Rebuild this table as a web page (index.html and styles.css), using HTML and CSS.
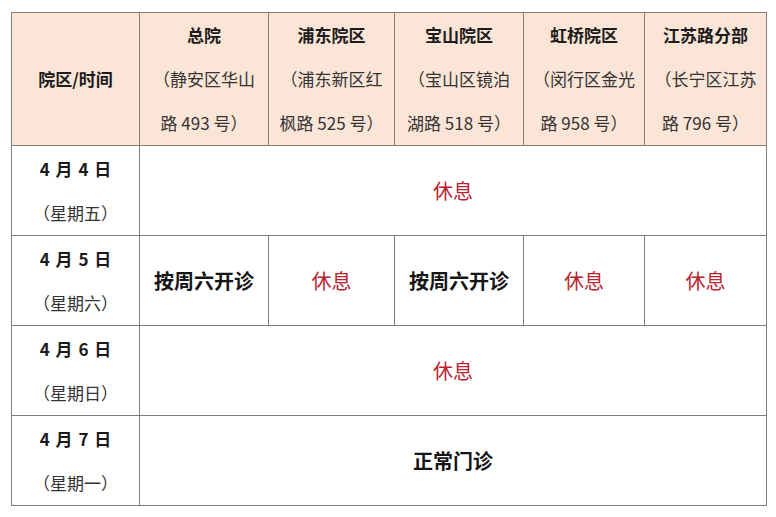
FILE: index.html
```html
<!DOCTYPE html>
<html lang="zh-CN">
<head>
<meta charset="utf-8">
<title>清明节门诊安排</title>
<link rel="stylesheet" href="styles.css">
</head>
<body>
<table class="schedule">
  <colgroup>
    <col class="c0"><col class="c1"><col class="c2"><col class="c3"><col class="c4"><col class="c5">
  </colgroup>
  <thead>
    <tr class="head-row">
      <th class="corner">院区/时间</th>
      <th><span class="name">总院</span><br><span class="addr">（静安区华山<br>路 493 号）</span></th>
      <th><span class="name">浦东院区</span><br><span class="addr">（浦东新区红<br>枫路 525 号）</span></th>
      <th><span class="name">宝山院区</span><br><span class="addr">（宝山区镜泊<br>湖路 518 号）</span></th>
      <th><span class="name">虹桥院区</span><br><span class="addr">（闵行区金光<br>路 958 号）</span></th>
      <th><span class="name">江苏路分部</span><br><span class="addr">（长宁区江苏<br>路 796 号）</span></th>
    </tr>
  </thead>
  <tbody>
    <tr class="day-row">
      <td class="date"><span class="d">4 月 4 日</span><br><span class="w">（星期五）</span></td>
      <td colspan="5" class="rest">休息</td>
    </tr>
    <tr class="day-row">
      <td class="date"><span class="d">4 月 5 日</span><br><span class="w">（星期六）</span></td>
      <td class="open">按周六开诊</td>
      <td class="rest">休息</td>
      <td class="open">按周六开诊</td>
      <td class="rest">休息</td>
      <td class="rest">休息</td>
    </tr>
    <tr class="day-row">
      <td class="date"><span class="d">4 月 6 日</span><br><span class="w">（星期日）</span></td>
      <td colspan="5" class="rest">休息</td>
    </tr>
    <tr class="day-row">
      <td class="date"><span class="d">4 月 7 日</span><br><span class="w">（星期一）</span></td>
      <td colspan="5" class="open">正常门诊</td>
    </tr>
  </tbody>
</table>
</body>
</html>
```

FILE: styles.css
```css
html, body {
  margin: 0;
  padding: 0;
  background: #ffffff;
}

body {
  font-family: "Noto Sans CJK SC", "Noto Sans", sans-serif;
  color: #222222;
}

.schedule {
  margin: 12px 0 0 11px;
  border-collapse: collapse;
  table-layout: fixed;
  width: 755px;
}

.c0 { width: 128px; }
.c1 { width: 129px; }
.c2 { width: 126px; }
.c3 { width: 129px; }
.c4 { width: 121px; }
.c5 { width: 122px; }

.schedule th,
.schedule td {
  border: 1px solid #7d7d7d;
  padding: 0;
  text-align: center;
  vertical-align: middle;
  white-space: nowrap;
  overflow: hidden;
}

.head-row {
  height: 132px;
}

.head-row th {
  background: #fbe5d7;
  border-color: #857e76;
  font-size: 17px;
  line-height: 44px;
  font-weight: normal;
}

.head-row .corner {
  font-weight: bold;
  color: #1c1c1c;
}

.name {
  font-weight: bold;
  color: #1c1c1c;
}

.addr {
  color: #333333;
}

.day-row {
  height: 90px;
}

.date {
  font-size: 17px;
  line-height: 44px;
}

.date .d {
  font-weight: bold;
  color: #1a1a1a;
  word-spacing: 2px;
}

.date .w {
  color: #333333;
}

.rest {
  font-size: 20px;
  color: #b8232f;
}

.open {
  font-size: 20px;
  font-weight: bold;
  color: #151515;
}
```
